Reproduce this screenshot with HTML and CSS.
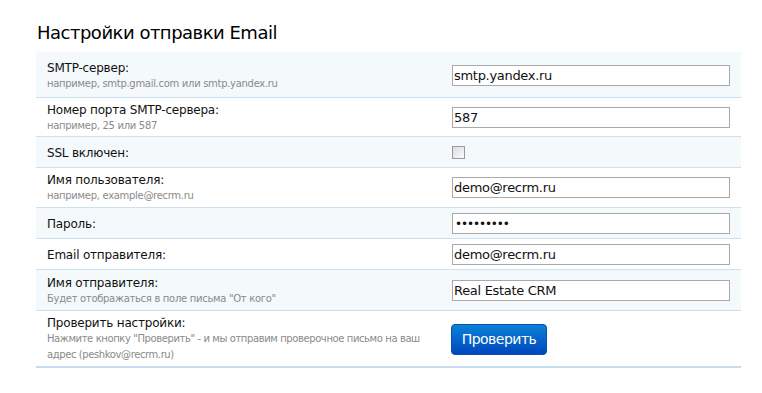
FILE: index.html
```html
<!DOCTYPE html>
<html>
<head>
    <title>Настройки отправки Email</title>
    <link rel="stylesheet" href="styles.css">
</head>
<body>
    <div class="settings">
        <h1 class="settings-title">Настройки отправки Email</h1>
        <table class="settings-table">
            <tr class="row-alt row-first">
                <td class="cell-label">
                    <div class="label">SMTP-сервер:</div>
                    <div class="hint">например, smtp.gmail.com или smtp.yandex.ru</div>
                </td>
                <td class="cell-value"><input class="field" type="text" value="smtp.yandex.ru"></td>
            </tr>
            <tr>
                <td class="cell-label">
                    <div class="label">Номер порта SMTP-сервера:</div>
                    <div class="hint">например, 25 или 587</div>
                </td>
                <td class="cell-value"><input class="field" type="text" value="587"></td>
            </tr>
            <tr class="row-alt row-single">
                <td class="cell-label"><div class="label">SSL включен:</div></td>
                <td class="cell-value"><div class="check-wrap"><span class="checkbox"></span></div></td>
            </tr>
            <tr class="row-tall">
                <td class="cell-label">
                    <div class="label">Имя пользователя:</div>
                    <div class="hint">например, example@recrm.ru</div>
                </td>
                <td class="cell-value"><input class="field" type="text" value="demo@recrm.ru"></td>
            </tr>
            <tr class="row-alt row-single">
                <td class="cell-label"><div class="label">Пароль:</div></td>
                <td class="cell-value"><input class="field field-pass" type="text" value="•••••••••"></td>
            </tr>
            <tr class="row-single">
                <td class="cell-label"><div class="label">Email отправителя:</div></td>
                <td class="cell-value"><input class="field" type="text" value="demo@recrm.ru"></td>
            </tr>
            <tr class="row-alt row-tall row-sender">
                <td class="cell-label">
                    <div class="label">Имя отправителя:</div>
                    <div class="hint">Будет отображаться в поле письма "От кого"</div>
                </td>
                <td class="cell-value"><input class="field" type="text" value="Real Estate CRM"></td>
            </tr>
            <tr class="row-last">
                <td class="cell-label">
                    <div class="label">Проверить настройки:</div>
                    <div class="hint hint-long"><span class="nowrap">Нажмите кнопку "Проверить" - и мы отправим проверочное письмо на ваш</span><br>адрес (peshkov@recrm.ru)</div>
                </td>
                <td class="cell-value"><button class="check-button">Проверить</button></td>
            </tr>
        </table>
    </div>
</body>
</html>
```

FILE: styles.css
```css
body {
    font-family: 'DejaVu Sans', Verdana, sans-serif;
    margin: 0;
    background-color: #ffffff;
    color: #111111;
}

.settings {
    padding: 22px 21px 0 36px;
    width: 705px;
}

.settings-title {
    font-size: 18px;
    font-weight: normal;
    margin: 0 0 9px 1px;
    letter-spacing: -0.5px;
    line-height: 21px;
    color: #000000;
}

.settings-table {
    width: 705px;
    border-collapse: collapse;
    table-layout: fixed;
}

.settings-table td {
    border-bottom: 1px solid #cde0f0;
    vertical-align: middle;
}

.row-alt td {
    background-color: #f4f9fc;
}

.cell-label {
    width: 394px;
    padding: 4px 0 3px 11px;
}

.cell-value {
    padding: 4px 11px 3px 0;
}

.row-first td {
    padding-top: 8px;
    padding-bottom: 6px;
}

.row-single td {
    padding-top: 5px;
    padding-bottom: 4px;
}

.row-tall td {
    padding-bottom: 4px;
}

.row-sender td {
    padding-top: 5px;
}

.row-last td {
    border-bottom: 2px solid #c6ddf1;
    padding-top: 4px;
    padding-bottom: 3px;
}

.label {
    font-size: 12px;
    line-height: 16px;
    letter-spacing: -0.2px;
}

.hint {
    font-size: 10px;
    line-height: 15px;
    color: #8a8a8a;
    letter-spacing: -0.3px;
}

.hint-long {
    line-height: 16px;
    letter-spacing: -0.4px;
}

.nowrap {
    white-space: nowrap;
}

.field {
    box-sizing: border-box;
    width: 278px;
    height: 21px;
    margin-left: 11px;
    border: 1px solid #a9a9a9;
    padding: 0 1px;
    font-family: 'DejaVu Sans', Verdana, sans-serif;
    font-size: 13px;
    letter-spacing: -0.3px;
    color: #111111;
    background-color: #ffffff;
    display: block;
}

.field-pass {
    font-size: 12px;
    letter-spacing: -1.1px;
    padding-left: 2px;
}

.check-wrap {
    height: 21px;
    display: flex;
    align-items: center;
}

.checkbox {
    display: block;
    width: 11px;
    height: 11px;
    margin-left: 11px;
    border: 1px solid #9a9a9a;
    background: linear-gradient(135deg, #dcdcdc, #fbfbfb);
}

.check-button {
    display: block;
    margin-left: 10px;
    width: 96px;
    height: 31px;
    border: 1px solid #0b4fb0;
    border-radius: 4px;
    background: linear-gradient(#0a82d6, #0047bd);
    color: #ffffff;
    font-family: 'DejaVu Sans', Verdana, sans-serif;
    font-size: 14px;
    letter-spacing: -0.5px;
    cursor: pointer;
}
```
